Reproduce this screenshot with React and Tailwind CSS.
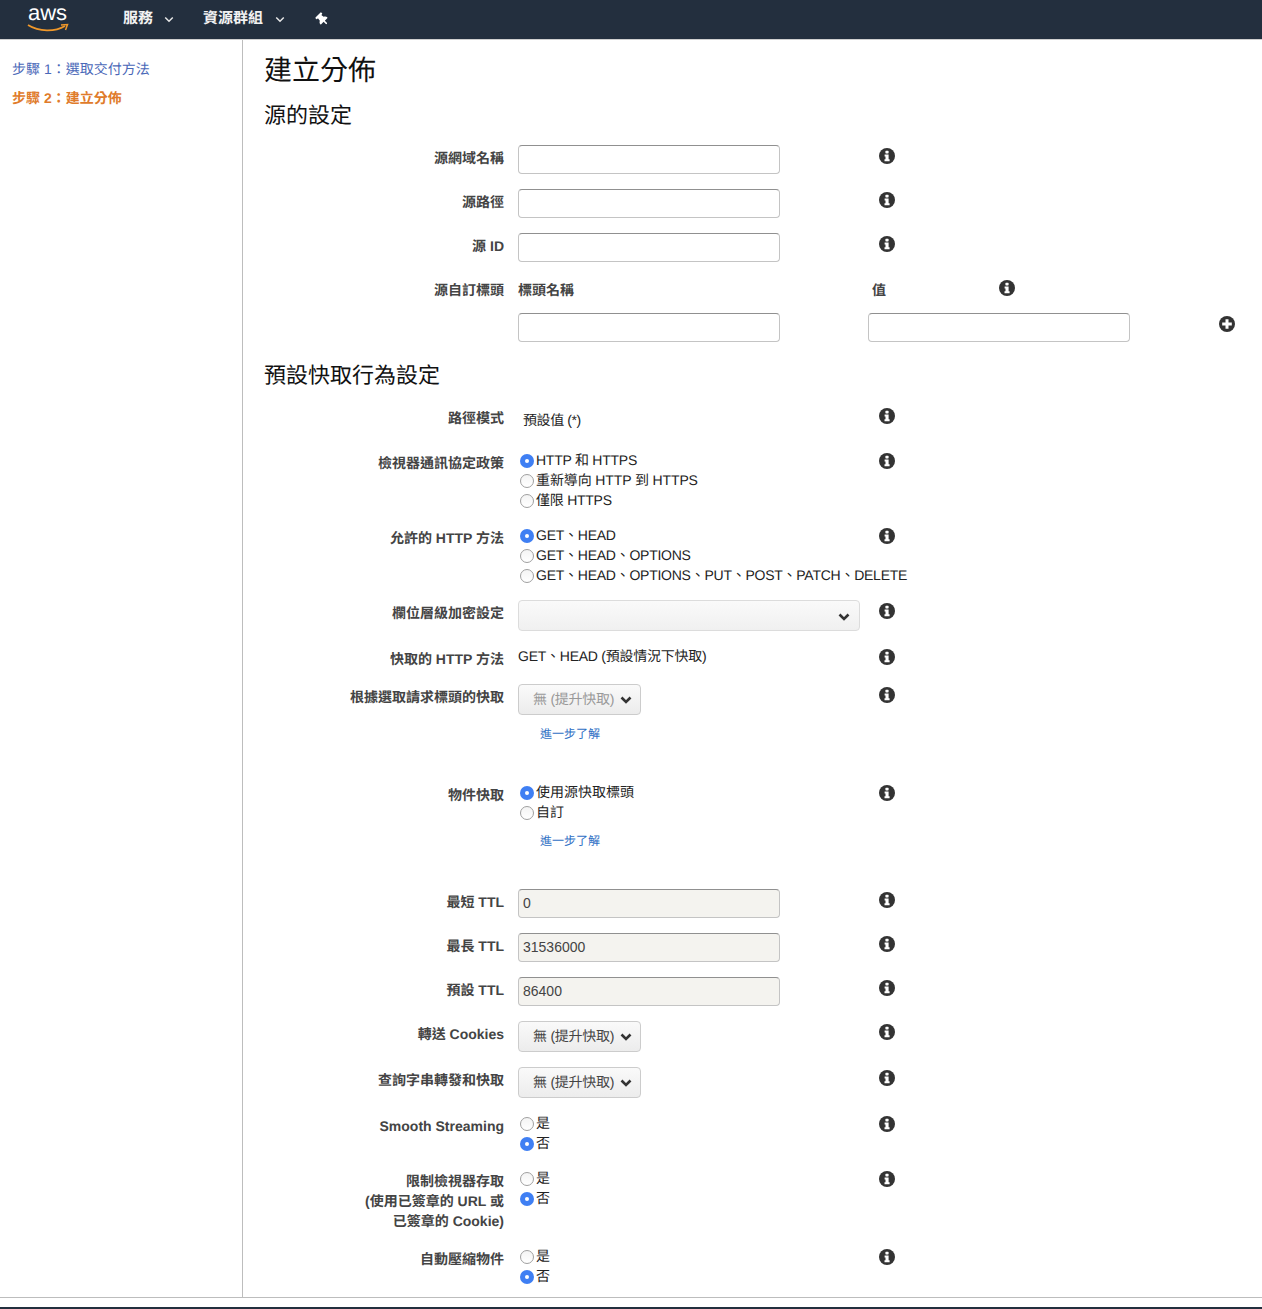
import React from "react";
import { FaThumbtack } from "react-icons/fa";

const font = "font-['Liberation_Sans','Noto_Sans_CJK_TC',sans-serif] [text-rendering:geometricPrecision]";

function Info() {
  return (
    <svg viewBox="0 0 16 16" className="w-4 h-4 block">
      <circle cx="8" cy="8" r="8" fill="#333" />
      <rect x="6.4" y="2.8" width="3.2" height="2.6" rx="0.6" fill="#fff" />
      <path d="M5.6 6.5 H9.6 V11.2 H10.6 V13.2 H5.5 V11.2 H6.5 V8.4 H5.6 Z" fill="#fff" />
    </svg>
  );
}

function Plus() {
  return (
    <svg viewBox="0 0 16 16" className="w-4 h-4 block">
      <circle cx="8" cy="8" r="8" fill="#333" />
      <path d="M6.5 3.2 H9.5 V6.5 H12.8 V9.5 H9.5 V12.8 H6.5 V9.5 H3.2 V6.5 H6.5 Z" fill="#fff" />
    </svg>
  );
}

function Chevron({ className, stroke = "#333", width = 2.6 }) {
  return (
    <svg viewBox="0 0 12 8" className={className}>
      <path d="M1.5 1.5 L6 6 L10.5 1.5" fill="none" stroke={stroke} strokeWidth={width} />
    </svg>
  );
}

function Row({ label, h, children, info = true }) {
  return (
    <div className={"flex items-start " + h}>
      <div className="w-[261px] pt-[3px] text-right text-sm leading-5 font-bold text-[#444] whitespace-pre-line">{label}</div>
      <div className="w-[361px] ml-[14px] shrink-0">{children}</div>
      {info && <div className="pt-[3px]"><Info /></div>}
    </div>
  );
}

function TextBox({ value, disabled }) {
  return (
    <input
      readOnly
      defaultValue={value}
      className={
        "block w-[262px] h-[29px] px-1 pb-[2px] text-sm text-[#444] rounded-[4px] border border-[#c4c4c4] border-t-[#909090] outline-none " +
        (disabled ? "bg-[#f4f3ef]" : "bg-white")
      }
    />
  );
}

function Radio({ checked, children, tracking = "" }) {
  return (
    <div className="flex items-center h-5 text-sm text-[#222] whitespace-nowrap">
      <span className="ml-[2px] mt-[2px] w-[14px] h-[14px] shrink-0 flex items-center justify-center">
        {checked ? (
          <span className="w-[14px] h-[14px] rounded-full bg-[#3f7ff3] flex items-center justify-center">
            <span className="w-1 h-1 rounded-full bg-white" />
          </span>
        ) : (
          <span className="w-[14px] h-[14px] rounded-full border border-[#a0a0a0] bg-gradient-to-b from-[#f4f4f4] to-white" />
        )}
      </span>
      <span className={"ml-[2px] " + tracking}>{children}</span>
    </div>
  );
}

function SelectBtn({ disabled }) {
  return (
    <div
      className={
        "w-[123px] h-[31px] flex items-center pl-[14px] pb-[2px] text-sm rounded-[4px] border border-[#cccccc] bg-gradient-to-b from-[#fafafa] to-[#ececec] " +
        (disabled ? "text-[#999]" : "text-[#444]")
      }
    >
      <span className="whitespace-nowrap tracking-[-0.25px]">無 (提升快取)</span>
      <Chevron className="w-3 h-2 ml-[6px] mt-[3px]" />
    </div>
  );
}

function Learn() {
  return <div className="ml-[22px] text-xs leading-5 text-[#2f6fc4]">進一步了解</div>;
}

function H2({ children, className }) {
  return <h2 className={"pl-[21px] h-[30px] leading-[30px] text-[22px] text-[#111] " + className}>{children}</h2>;
}

export default function App() {
  const tight = "tracking-[-0.25px]";
  return (
    <div className={"w-[1262px] h-[1309px] bg-white overflow-hidden flex flex-col " + font}>
      <header className="h-[39px] shrink-0 bg-[#232f3e] flex items-center text-white">
        <div className="ml-[27px] w-[42px] h-[32px] relative">
          <span className="absolute left-[1px] -top-[3px] text-[22px] leading-[24px] text-white">aws</span>
          <svg viewBox="0 0 42 10" className="absolute left-0 top-[19px] w-[42px] h-[10px]">
            <path d="M1 2 C12 9 28 9 38 3" fill="none" stroke="#f0982a" strokeWidth="1.7" />
            <path d="M34 2 L40.5 1.5 L38.5 7" fill="none" stroke="#f0982a" strokeWidth="1.5" />
          </svg>
        </div>
        <span className="ml-[54px] text-[15px] font-bold text-[#f2f2f2]">服務</span>
        <Chevron className="ml-[11px] w-[10px] h-[7px]" stroke="#e8e8e8" width={1.8} />
        <span className="ml-[29px] text-[15px] font-bold text-[#f2f2f2]">資源群組</span>
        <Chevron className="ml-[12px] w-[10px] h-[7px]" stroke="#e8e8e8" width={1.8} />
        <FaThumbtack className="ml-[31px] w-[13px] h-[13px] -rotate-45 text-white" />
      </header>
      <div className="h-px shrink-0 bg-[#cfcfcf]" />
      <div className="h-[1257px] shrink-0 flex">
        <aside className="w-[243px] shrink-0 border-r border-[#bdbdbd] pl-3 pt-[19px] text-sm">
          <div className="h-5 leading-5 text-[#4a68b8]">步驟 1：選取交付方法</div>
          <div className="h-5 leading-5 mt-[9px] font-bold text-[#e07b2b]">步驟 2：建立分佈</div>
        </aside>
        <main className="flex-1 min-w-0 pt-[11px]">
          <h1 className="pl-[21px] h-10 leading-10 text-[28px] text-[#111]">建立分佈</h1>
          <H2 className="mt-[10px] mb-[14px]">源的設定</H2>

          <Row label="源網域名稱" h="h-[44px]"><TextBox /></Row>
          <Row label="源路徑" h="h-[44px]"><TextBox /></Row>
          <Row label="源 ID" h="h-[44px]"><TextBox /></Row>

          <div className="flex items-start h-[36px] relative">
            <div className="w-[261px] pt-[3px] text-right text-sm leading-5 font-bold text-[#444]">源自訂標頭</div>
            <div className="ml-[14px] w-[354px] pt-[3px] text-sm leading-5 font-bold text-[#444]">標頭名稱</div>
            <div className="w-[127px] pt-[3px] text-sm leading-5 font-bold text-[#444]">值</div>
            <div className="pt-[3px]"><Info /></div>
          </div>
          <div className="flex items-start h-[38px]">
            <div className="ml-[275px] w-[350px]"><TextBox /></div>
            <TextBox />
            <div className="ml-[89px] pt-[3px]"><Plus /></div>
          </div>

          <H2 className="mt-[10px] mb-[14px]">預設快取行為設定</H2>

          <Row label="路徑模式" h="h-[45px]">
            <div className="pl-[5px] pt-[5px] text-sm leading-5 text-[#222] tracking-[-0.4px]">預設值 (*)</div>
          </Row>
          <Row label="檢視器通訊協定政策" h="h-[75px]">
            <Radio checked tracking={tight}>HTTP 和 HTTPS</Radio>
            <Radio tracking="tracking-[-0.12px]">重新導向 HTTP 到 HTTPS</Radio>
            <Radio tracking={tight}>僅限 HTTPS</Radio>
          </Row>
          <Row label="允許的 HTTP 方法" h="h-[75px]">
            <Radio checked tracking={tight}>GET、HEAD</Radio>
            <Radio tracking={tight}>GET、HEAD、OPTIONS</Radio>
            <Radio tracking={tight}>GET、HEAD、OPTIONS、PUT、POST、PATCH、DELETE</Radio>
          </Row>
          <Row label="欄位層級加密設定" h="h-[46px]">
            <div className="w-[342px] h-[31px] flex items-center justify-end pr-[9px] rounded-[4px] border border-[#dcdcdc] bg-gradient-to-b from-[#fafafa] to-[#f0f0f0]">
              <Chevron className="w-3 h-2 mt-[3px]" />
            </div>
          </Row>
          <Row label="快取的 HTTP 方法" h="h-[38px]">
            <div className={"text-sm leading-5 text-[#222] whitespace-nowrap " + tight}>GET、HEAD (預設情況下快取)</div>
          </Row>
          <Row label="根據選取請求標頭的快取" h="h-[98px]">
            <SelectBtn disabled />
            <div className="mt-[9px]"><Learn /></div>
          </Row>
          <Row label="物件快取" h="h-[107px]">
            <Radio checked>使用源快取標頭</Radio>
            <Radio>自訂</Radio>
            <div className="mt-[9px]"><Learn /></div>
          </Row>
          <Row label="最短 TTL" h="h-[44px]"><TextBox value="0" disabled /></Row>
          <Row label="最長 TTL" h="h-[44px]"><TextBox value="31536000" disabled /></Row>
          <Row label="預設 TTL" h="h-[44px]"><TextBox value="86400" disabled /></Row>
          <Row label="轉送 Cookies" h="h-[46px]"><SelectBtn /></Row>
          <Row label="查詢字串轉發和快取" h="h-[46px]"><SelectBtn /></Row>
          <Row label="Smooth Streaming" h="h-[55px]">
            <Radio>是</Radio>
            <Radio checked>否</Radio>
          </Row>
          <Row label={"限制檢視器存取\n(使用已簽章的 URL 或\n已簽章的 Cookie)"} h="h-[78px]">
            <Radio>是</Radio>
            <Radio checked>否</Radio>
          </Row>
          <Row label="自動壓縮物件" h="h-[51px]">
            <Radio>是</Radio>
            <Radio checked>否</Radio>
          </Row>
        </main>
      </div>
      <div className="h-px shrink-0 bg-[#bdbdbd]" />
      <div className="h-[9px] shrink-0 bg-white" />
      <div className="flex-1 bg-[#232f3e]" />
    </div>
  );
}
